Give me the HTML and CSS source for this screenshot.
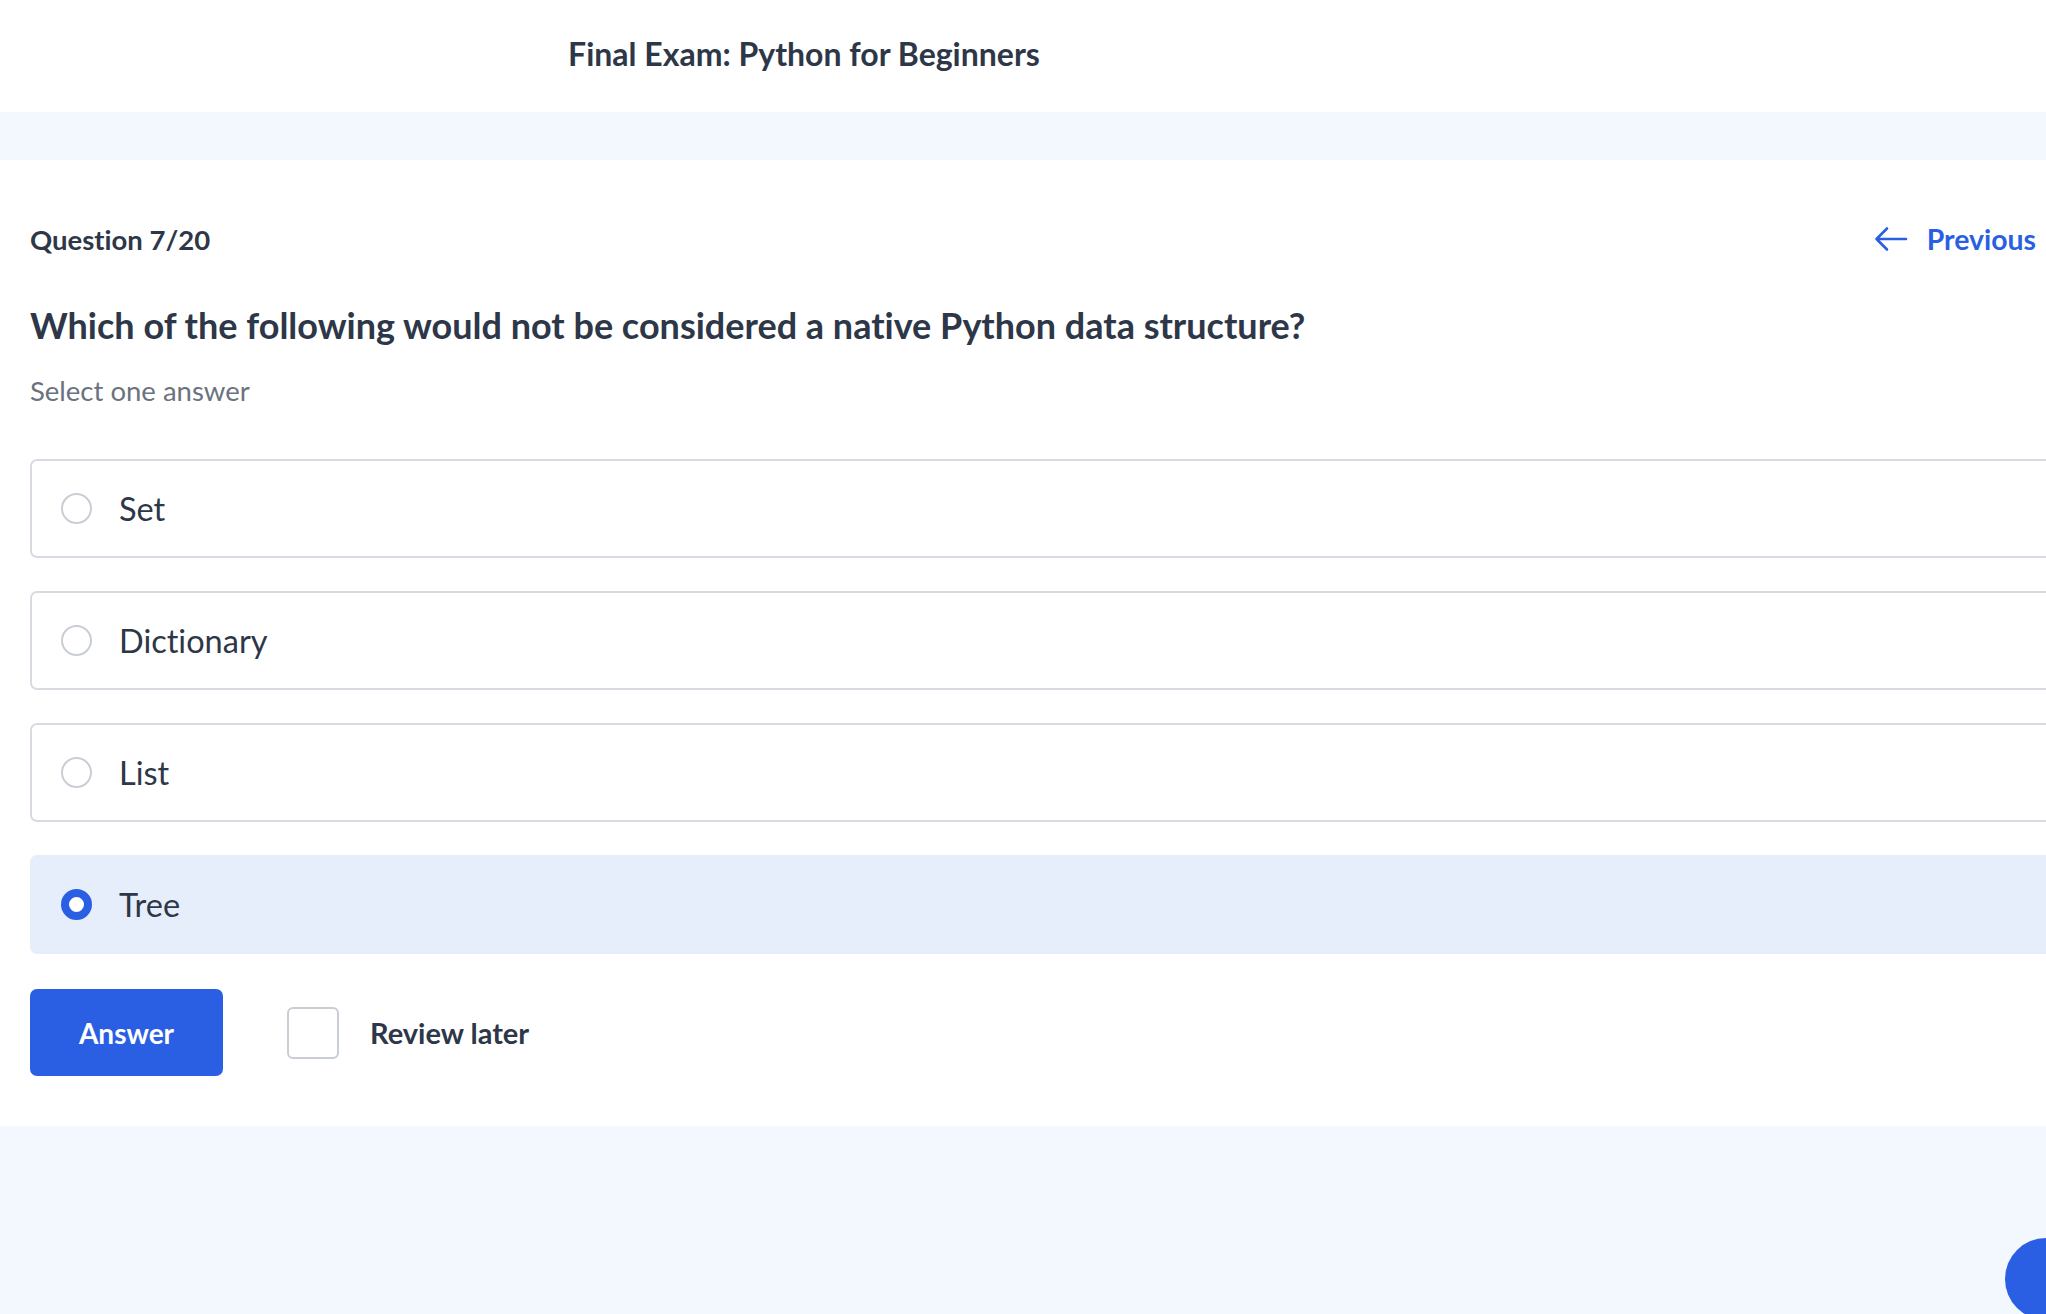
FILE: index.html
```html
<!DOCTYPE html>
<html lang="en">
<head>
<meta charset="utf-8">
<title>Final Exam: Python for Beginners</title>
<link rel="stylesheet" href="styles.css">
</head>
<body>
<header class="top">
  <div class="top-inner">
    <h1 class="exam-title">Final Exam: Python for Beginners</h1>
  </div>
</header>
<div class="band"></div>
<main class="card">
  <div class="q-row">
    <span class="q-count">Question 7/20</span>
    <a class="prev" href="#">
      <svg class="prev-icon" width="34" height="26" viewBox="0 0 34 26" fill="none" stroke="currentColor" stroke-width="2.6" stroke-linecap="round" stroke-linejoin="round"><path d="M2.5 13H32M13 2.5L2.5 13L13 23.5"/></svg>
      <span>Previous</span>
    </a>
  </div>
  <h2 class="q-text">Which of the following would not be considered a native Python data structure?</h2>
  <p class="hint">Select one answer</p>
  <ul class="options">
    <li class="option"><span class="radio"></span><span class="opt-label">Set</span></li>
    <li class="option"><span class="radio"></span><span class="opt-label">Dictionary</span></li>
    <li class="option"><span class="radio"></span><span class="opt-label">List</span></li>
    <li class="option selected"><span class="radio"></span><span class="opt-label">Tree</span></li>
  </ul>
  <div class="actions">
    <button class="answer-btn">Answer</button>
    <label class="review"><span class="checkbox"></span><span class="review-label">Review later</span></label>
  </div>
</main>
<div class="chat-bubble"></div>
</body>
</html>
```
FILE: styles.css
```css
html, body {
  margin: 0;
  padding: 0;
}
body {
  font-family: Lato, "Open Sans", "Liberation Sans", sans-serif;
  font-variant-ligatures: none;
  font-feature-settings: "liga" 0, "clig" 0, "dlig" 0;
  color: #2d3748;
  background: #f3f7fe;
  overflow: hidden;
  width: 2046px;
  height: 1314px;
}
.top {
  background: #ffffff;
  height: 112px;
}
.top-inner {
  width: 1608px;
  height: 112px;
  display: flex;
  align-items: center;
  justify-content: center;
}
.exam-title {
  margin: 0;
  font-size: 32px;
  font-weight: 700;
  color: #2d3748;
  line-height: 1;
  padding-bottom: 4px;
}
.band {
  height: 48px;
}
.card {
  background: #ffffff;
  padding: 62px 0 50px 30px;
}
.q-row {
  display: flex;
  align-items: center;
  justify-content: space-between;
  height: 34px;
  padding-right: 10px;
}
.q-count {
  font-size: 27.5px;
  font-weight: 700;
  color: #2d3748;
}
.prev {
  display: flex;
  align-items: center;
  gap: 19px;
  color: #2a5fe3;
  text-decoration: none;
  font-size: 28.4px;
  font-weight: 700;
}
.prev-icon {
  display: block;
}
.q-text {
  margin: 47px 0 0;
  font-size: 36px;
  line-height: 44px;
  font-weight: 700;
  color: #2d3748;
}
.hint {
  margin: 27px 0 0;
  font-size: 27.5px;
  line-height: 34px;
  color: #6b7280;
}
.options {
  list-style: none;
  margin: 51px -60px 0 0;
  padding: 0;
  display: flex;
  flex-direction: column;
  gap: 33px;
}
.option {
  height: 99px;
  box-sizing: border-box;
  border: 2px solid #d7dbe1;
  border-radius: 7px;
  display: flex;
  align-items: center;
  padding-left: 29px;
  gap: 27px;
  background: #ffffff;
}
.option.selected {
  background: #e7eefb;
  border-color: #e7eefb;
}
.radio {
  width: 31px;
  height: 31px;
  box-sizing: border-box;
  border: 2px solid #c9ced6;
  border-radius: 50%;
  background: #ffffff;
  flex: none;
}
.option.selected .radio {
  border: 8px solid #2a5fe3;
}
.opt-label {
  font-size: 32.5px;
  color: #2d3748;
}
.actions {
  margin-top: 35px;
  display: flex;
  align-items: center;
}
.answer-btn {
  width: 193px;
  height: 87px;
  border: none;
  border-radius: 7px;
  background: #2a5fe3;
  color: #ffffff;
  font-family: inherit;
  font-size: 28px;
  font-weight: 700;
  padding: 0;
}
.review {
  display: flex;
  align-items: center;
  margin-left: 64px;
  gap: 31px;
}
.checkbox {
  width: 52px;
  height: 52px;
  box-sizing: border-box;
  border: 2px solid #c9ced6;
  border-radius: 6px;
  background: #ffffff;
}
.review-label {
  font-size: 29px;
  font-weight: 700;
  color: #2d3748;
}
.chat-bubble {
  position: fixed;
  right: -41px;
  bottom: -6px;
  width: 82px;
  height: 82px;
  border-radius: 50%;
  background: #2a5fe3;
}
```
